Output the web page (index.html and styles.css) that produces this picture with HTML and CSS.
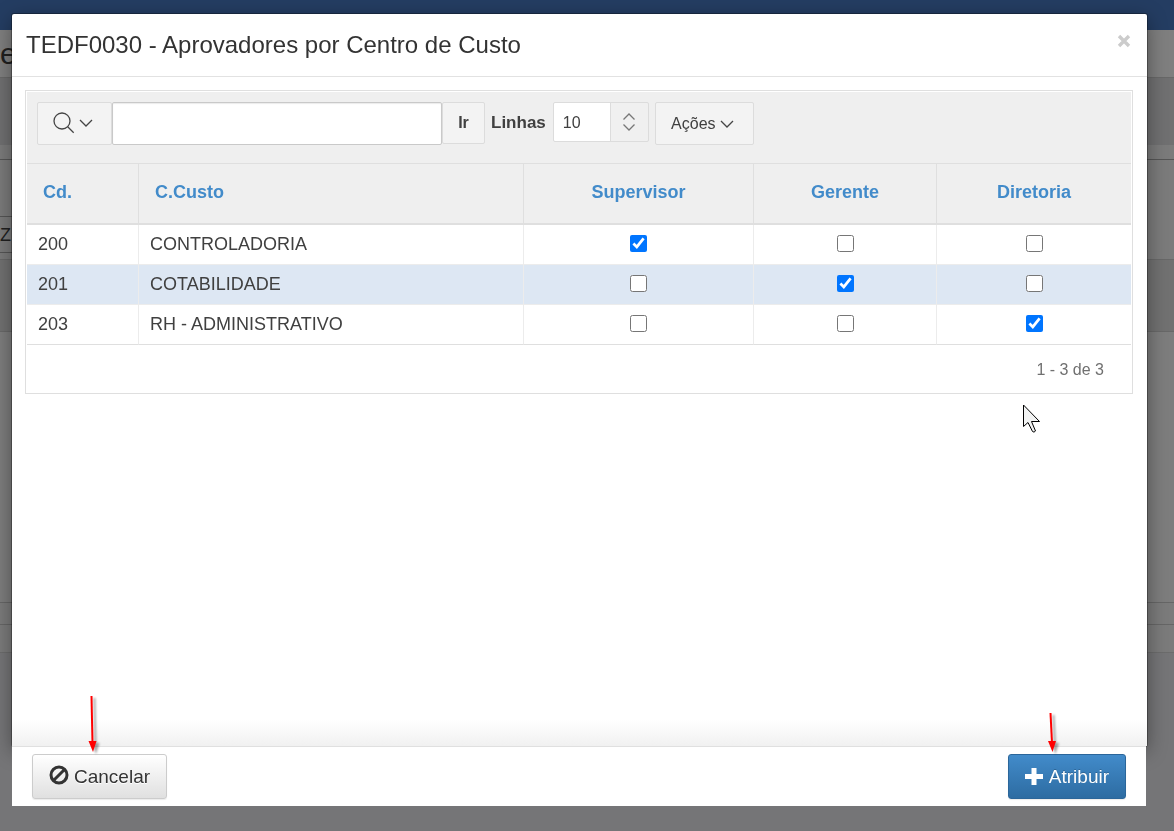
FILE: index.html
```html
<!DOCTYPE html>
<html lang="pt-BR">
<head>
<meta charset="utf-8">
<meta name="viewport" content="width=device-width, initial-scale=1">
<title>TEDF0030 - Aprovadores por Centro de Custo</title>
<link rel="stylesheet" href="styles.css">
</head>
<body>
<div class="page" aria-hidden="true">
  <div class="page-nav"></div>
  <div class="page-title">e</div>
  <div class="page-band page-band-dark"></div>
  <div class="page-gap"></div>
  <div class="page-form"><div class="page-field">Z</div></div>
  <div class="page-band page-band-mid"></div>
  <div class="page-content"></div>
  <div class="page-row"></div>
  <div class="page-row page-row-last"></div>
</div>

<div class="overlay">
  <section class="dialog" role="dialog" aria-labelledby="dialog-title">
    <header class="dialog-header">
      <h1 class="dialog-title" id="dialog-title">TEDF0030 - Aprovadores por Centro de Custo</h1>
      <button class="close" type="button" aria-label="Fechar">
        <svg width="14" height="14" viewBox="0 0 14 14"><path d="M2 2 12 12M12 2 2 12" stroke="#ccc" stroke-width="3.4"/></svg>
      </button>
    </header>
    <div class="dialog-body">
      <div class="report">
        <div class="toolbar">
          <div class="search">
            <button class="tool search-menu" type="button" aria-label="Selecionar colunas para pesquisar">
              <svg width="22" height="22" viewBox="0 0 22 22" fill="none" stroke="#444" stroke-width="1.3"><circle cx="9" cy="9" r="8"/><path d="m14.700 14.700 6 6"/></svg>
              <svg width="14" height="8" viewBox="0 0 14 8" fill="none" stroke="#444" stroke-width="1.3"><path d="m1 1 6 6 6-6"/></svg>
            </button>
            <input class="search-input" type="text" aria-label="Pesquisar">
            <button class="tool go" type="button">Ir</button>
          </div>
          <label class="rows-label" for="rows">Linhas</label>
          <div class="rows">
            <select class="rows-select" id="rows"><option>10</option></select>
            <svg class="rows-icon" width="14" height="18" viewBox="0 0 14 18" fill="none" stroke="#777" stroke-width="1.3"><path d="m1.500 6.500 5.500-5.500 5.500 5.500M1.500 11.500 7 17l5.500-5.500"/></svg>
          </div>
          <button class="tool actions" type="button">Ações
            <svg width="14" height="8" viewBox="0 0 14 8" fill="none" stroke="#444" stroke-width="1.3"><path d="m1 1 6 6 6-6"/></svg>
          </button>
        </div>
        <table class="grid">
          <colgroup><col class="c-code"><col class="c-name"><col class="c-sup"><col class="c-ger"><col class="c-dir"></colgroup>
          <thead>
            <tr><th><a href="#">Cd.</a></th><th><a href="#">C.Custo</a></th><th class="center"><a href="#">Supervisor</a></th><th class="center"><a href="#">Gerente</a></th><th class="center"><a href="#">Diretoria</a></th></tr>
          </thead>
          <tbody>
            <tr><td>200</td><td>CONTROLADORIA</td><td class="center"><input type="checkbox" aria-label="Supervisor 200" checked></td><td class="center"><input type="checkbox" aria-label="Gerente 200"></td><td class="center"><input type="checkbox" aria-label="Diretoria 200"></td></tr>
            <tr class="selected"><td>201</td><td>COTABILIDADE</td><td class="center"><input type="checkbox" aria-label="Supervisor 201"></td><td class="center"><input type="checkbox" aria-label="Gerente 201" checked></td><td class="center"><input type="checkbox" aria-label="Diretoria 201"></td></tr>
            <tr><td>203</td><td>RH - ADMINISTRATIVO</td><td class="center"><input type="checkbox" aria-label="Supervisor 203"></td><td class="center"><input type="checkbox" aria-label="Gerente 203"></td><td class="center"><input type="checkbox" aria-label="Diretoria 203" checked></td></tr>
          </tbody>
        </table>
        <div class="pagination">1 - 3 de 3</div>
      </div>
    </div>
  </section>
  <footer class="dialog-footer">
    <div class="action">
      <button class="btn" type="button">
        <svg width="20" height="24" viewBox="0 0 20 24" fill="none" stroke="#333" stroke-width="3"><circle cx="10" cy="10" r="8"/><path d="M4.500 15.500 15.500 4.500"/></svg>
        Cancelar
      </button>
      <svg class="arrow arrow-cancel" width="14" height="60" viewBox="0 0 14 60"><path d="M5.500 3 6.500 50" stroke="#f00" stroke-width="2"/><path d="M2.500 48h8L7 59z" fill="#f00"/></svg>
    </div>
    <div class="action">
      <button class="btn btn-primary" type="button">
        <svg width="19" height="20" viewBox="0 0 19 20"><path d="M6.500 1h5v6h6.500v5h-6.500v6h-5v-6H0V7h6.500z" fill="#fff"/></svg>
        Atribuir
      </button>
      <svg class="arrow arrow-assign" width="14" height="60" viewBox="0 0 14 60"><path d="M4.500 20 6 50" stroke="#f00" stroke-width="2"/><path d="M2 48h8L6.500 59z" fill="#f00"/></svg>
    </div>
  </footer>
</div>
<svg class="cursor" width="18" height="30" viewBox="0 0 18 30"><path d="M1.500 1v21.500l4.500-4 4.500 9q1.500 1.500 3-.5l-4-9.500H17.500z" fill="#f2f3f3" stroke="#000"/></svg>
</body>
</html>
```
FILE: styles.css
```css
* { box-sizing: border-box; }

body {
  margin: 0;
  min-height: 100vh;
  overflow: hidden;
  background: #757577;
  color: #404040;
  font-family: "Liberation Sans", Arial, sans-serif;
  font-size: 18px;
}

button, input, select { font-family: inherit; color: inherit; }
svg { display: block; flex: none; }

/* Dimmed page behind the dialog */
.page-nav { height: 30px; background: #243d62; }
.page-title { height: 47px; background: #7f7f7f; color: #202020; font-size: 30px; line-height: 47px; }
.page-band { border-top: 1px solid #686868; }
.page-band-dark { height: 68px; background: #707071; }
.page-gap { height: 14px; background: #7b7b7b; }
.page-form { height: 100px; padding-top: 56px; background: #7b7b7b; border-top: 1px solid #555; }
.page-field { width: 40px; height: 37px; border: 1px solid #555; border-left: 0; color: #202020; line-height: 36px; }
.page-band-mid { height: 72px; background: #717171; }
.page-content { height: 271px; background: #7d7d7d; border-top: 1px solid #686868; }
.page-row { height: 22px; background: #7b7b7b; border-top: 1px solid #666; }
.page-row-last { height: 29px; border-bottom: 1px solid #6c6c6c; }

/* Dialog */
.overlay {
  position: fixed;
  inset: 14px 27px 25px 12px;
  display: flex;
  flex-direction: column;
}
.dialog {
  flex: 1;
  display: flex;
  flex-direction: column;
  min-height: 0;
  background: #fff;
  border-radius: 2px;
  box-shadow: 0 0 0 1px rgba(0, 0, 0, .3), 0 5px 20px rgba(0, 0, 0, .4);
}
.dialog-header {
  display: flex;
  align-items: flex-start;
  justify-content: space-between;
  height: 63px;
  padding: 16px 14px 0;
  border-bottom: 1px solid #e2e2e2;
}
.dialog-title { margin: 0; color: #333; font-size: 24px; font-weight: 400; line-height: 30px; }
.close { margin: 4px 2px; padding: 0; border: 0; background: none; }
.dialog-body {
  flex: 1;
  padding: 13px 14px 0 13px;
  background: linear-gradient(to top, #f1f1f1, #fff 26px);
}

.report { padding: 1px; border: 1px solid #dfdfdf; background: #fff; }
.toolbar {
  display: flex;
  align-items: flex-start;
  height: 71px;
  padding: 10px;
  background: #efefef;
}
.tool {
  display: flex;
  align-items: center;
  justify-content: center;
  padding: 0;
  border: 1px solid #dcdcdc;
  border-radius: 2px;
  background: #f3f3f3;
  font-size: 16px;
}
.search { display: flex; align-items: flex-start; }
.search-menu { gap: 4px; width: 75px; height: 43px; padding: 0 4px 2px 0; }
.search-input {
  width: 330px;
  height: 43px;
  padding: 0 8px;
  border: 1px solid #c9c9c9;
  border-radius: 2px;
  background: #fff;
  box-shadow: inset 0 1px 1px rgba(0, 0, 0, .08);
  font-size: 16px;
}
.go { width: 43px; height: 42px; font-weight: 700; }
.rows-label { margin: 0 7px 0 6px; font-size: 17px; font-weight: 700; line-height: 42px; }
.rows { position: relative; }
.rows-select {
  width: 96px;
  height: 40px;
  padding: 0 9px;
  appearance: none;
  border: 1px solid #dcdcdc;
  border-radius: 2px;
  background: linear-gradient(to right, #fff 56px, #dcdcdc 56px 57px, #f0f0f0 57px);
  font-size: 16px;
}
.rows-icon { position: absolute; top: 11px; right: 13px; pointer-events: none; }
.actions { gap: 4px; width: 99px; height: 43px; margin-left: 6px; padding-right: 4px; }

.grid { width: 100%; table-layout: fixed; border-collapse: separate; border-spacing: 0; }
.c-code { width: 112px; }
.c-name { width: 385px; }
.c-sup { width: 230px; }
.c-ger { width: 183px; }
.c-dir { width: 194px; }
.grid th {
  height: 62px;
  padding: 0 16px 2px;
  border: solid #dfdfdf;
  border-width: 1px 1px 2px 0;
  background: #efefef;
  text-align: left;
}
.grid th a { color: #428bca; text-decoration: none; }
.grid td {
  height: 40px;
  padding: 0 11px 2px;
  border: solid #ececec;
  border-width: 0 1px 1px 0;
  line-height: 20px;
}
.grid th:last-child, .grid td:last-child { border-right: 0; }
.grid tbody tr:last-child td { border-bottom-color: #dfdfdf; }
.grid .center { text-align: center; }
.selected { background: #dde7f3; }
.grid input { display: block; width: 17px; height: 17px; margin: 0 auto; }
.pagination { padding: 2px 27px 0; color: #707070; font-size: 16px; line-height: 45px; text-align: right; }

.dialog-footer {
  position: relative;
  display: flex;
  align-items: flex-start;
  justify-content: space-between;
  height: 60px;
  margin-right: 1px;
  padding: 7px 20px;
  border-top: 1px solid #e0e0e0;
  background: #fff;
}
.action { position: relative; }
.btn {
  display: flex;
  align-items: center;
  gap: 5px;
  height: 45px;
  padding: 0 16px;
  border: 1px solid #ccc;
  border-radius: 3px;
  background: linear-gradient(#fff, #e0e0e0);
  box-shadow: 0 1px 1px rgba(0, 0, 0, .08);
  color: #333;
  font-size: 19px;
  text-shadow: 0 1px 0 #fff;
}
.btn-primary {
  border-color: #2b669a;
  background: linear-gradient(#428bca, #2d6ca2);
  color: #fff;
  text-shadow: 0 -1px 0 rgba(0, 0, 0, .2);
}

/* Pointers drawn above the action buttons */
.arrow { position: absolute; bottom: 46px; filter: drop-shadow(3px 2px 1px rgba(0, 0, 0, .35)); }
.arrow-cancel { left: 54px; }
.arrow-assign { left: 38px; }
.cursor { position: fixed; top: 404px; left: 1022px; }
```
